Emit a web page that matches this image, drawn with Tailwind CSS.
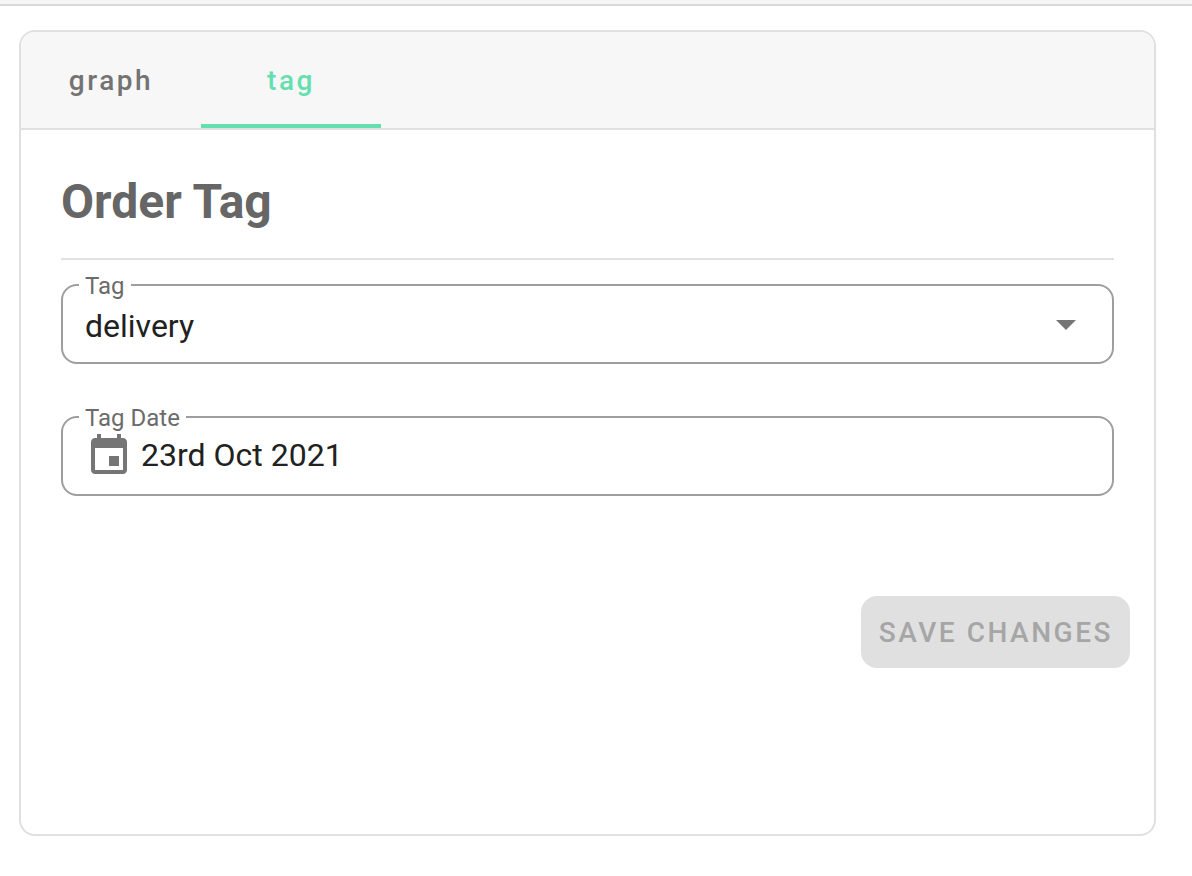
<!DOCTYPE html>
<html lang="en">
<head>
<meta charset="utf-8">
<meta name="viewport" content="width=device-width, initial-scale=1">
<title>Order Tag</title>
<script src="https://cdn.jsdelivr.net/npm/@tailwindcss/browser@4"></script>
</head>
<body class="flex min-h-screen flex-col bg-white font-[Roboto,sans-serif] text-[#212121]">
  <header class="h-[6px] border-b-2 border-[#d8d8d8] bg-[#f6f6f6]"></header>
  <main class="flex flex-1 flex-col pt-6 pr-9 pb-10 pl-[19px]">
    <section class="flex flex-1 flex-col overflow-hidden rounded-2xl border-2 border-[#e0e0e0] bg-white">
      <div role="tablist" class="flex h-[98px] border-b-2 border-[#e0e0e0] bg-[#f7f7f7] text-[28px] font-medium tracking-[0.09em]">
        <button type="button" role="tab" aria-selected="false" class="w-[180px] border-b-4 border-transparent pt-1.5 text-[#737373]">graph</button>
        <button type="button" role="tab" aria-selected="true" class="w-[180px] border-b-4 border-[#66dfb0] pt-1.5 text-[#66dfb0]">tag</button>
      </div>
      <form class="flex flex-col">
        <div class="px-10 pt-10">
          <h1 class="border-b-2 border-[#e0e0e0] pb-6 text-[48px] leading-[64px] font-bold text-[#666666]">Order Tag</h1>
          <fieldset class="mt-6 rounded-2xl border-2 border-[#9e9e9e]">
            <legend class="ml-4 h-[2px] px-[6px] text-[24px] leading-[4px] text-[#6b6b6b]"><label for="tag">Tag</label></legend>
            <div class="grid h-[76px] items-center">
              <select id="tag" class="col-start-1 row-start-1 h-12 w-full appearance-none bg-transparent px-[22px] pt-0.5 text-[32px] leading-[48px] outline-none">
                <option>delivery</option>
              </select>
              <svg class="pointer-events-none col-start-1 row-start-1 mr-[22px] size-12 justify-self-end fill-[#757575]" viewBox="0 0 24 24" aria-hidden="true"><path d="M7 10l5 5 5-5z"/></svg>
            </div>
          </fieldset>
          <fieldset class="mt-[52px] rounded-2xl border-2 border-[#9e9e9e]">
            <legend class="ml-4 h-[2px] px-[6px] text-[24px] leading-[4px] text-[#6b6b6b]"><label for="tag-date">Tag Date</label></legend>
            <div class="flex h-[76px] items-center gap-2 px-[22px]">
              <svg class="size-12 shrink-0 fill-[#757575]" viewBox="0 0 24 24" aria-hidden="true"><path d="M19 3h-1V1h-2v2H8V1H6v2H5c-1.100 0-2 .9-2 2v14c0 1.100.9 2 2 2h14c1.100 0 2-.9 2-2V5c0-1.100-.9-2-2-2zm0 16H5V8h14zM12 12h5v5h-5z"/></svg>
              <input id="tag-date" type="text" readonly value="23rd Oct 2021" class="h-12 min-w-0 flex-1 bg-transparent pb-0.5 text-[32px] outline-none">
            </div>
          </fieldset>
        </div>
        <div class="flex justify-end px-6 pt-[100px]">
          <button type="submit" disabled class="h-[72px] rounded-2xl bg-[#e0e0e0] pt-0.5 pr-[17px] pl-[18px] text-[28px] font-medium tracking-[0.09em] text-[#a6a6a6]">SAVE CHANGES</button>
        </div>
      </form>
    </section>
  </main>
</body>
</html>
